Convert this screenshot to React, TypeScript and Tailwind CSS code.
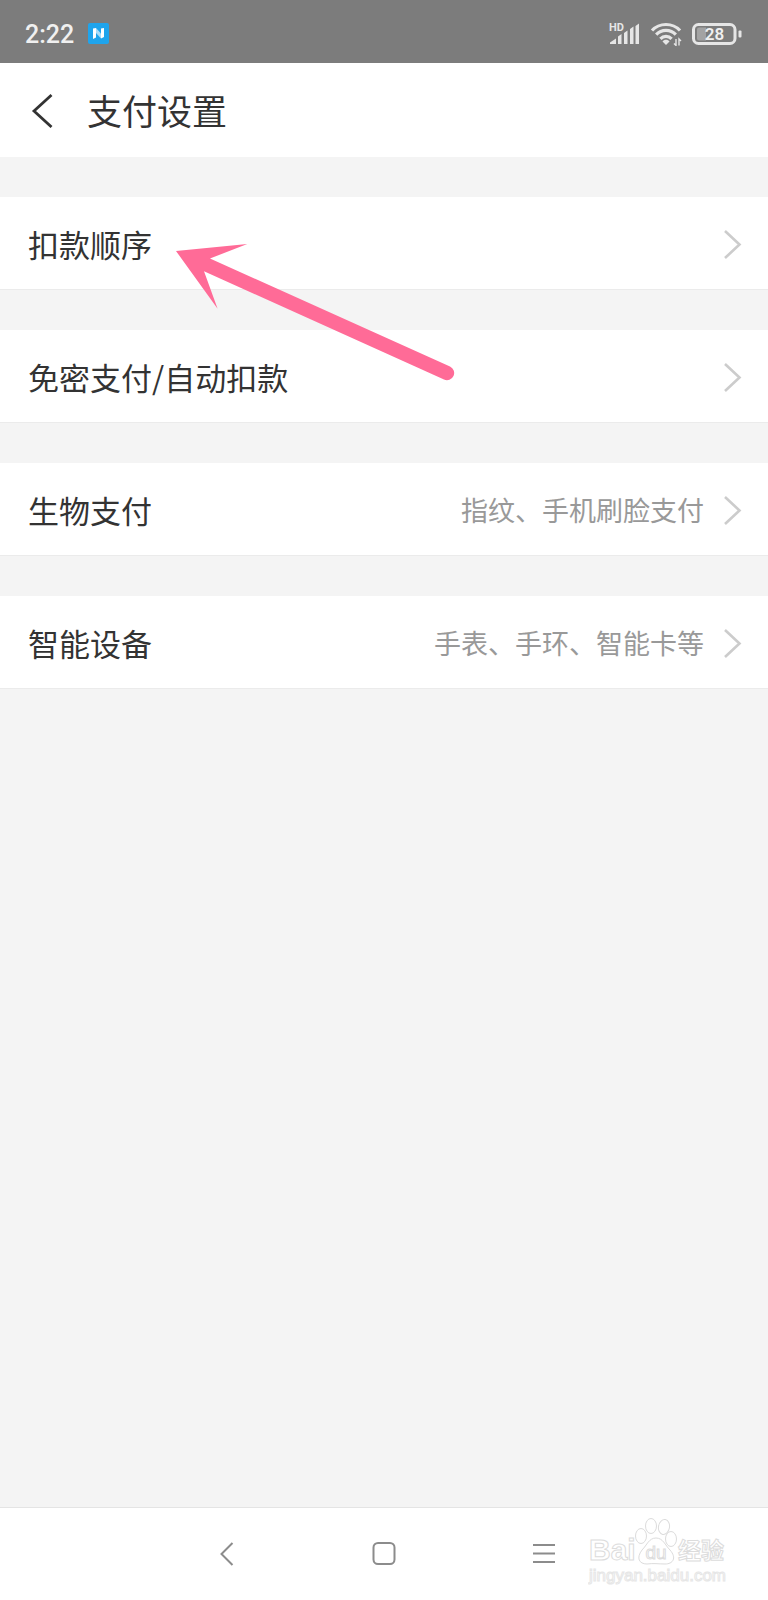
import React, { JSX } from "react";

interface SettingRowProps {
  name: string,
  detail?: string,
}

const SettingRow = ({ name, detail }: SettingRowProps) => (
  <li className="border-b border-[#ebebeb] bg-white">
    <button className="flex h-[92px] w-full cursor-pointer items-center pl-7 pr-[26px] pt-0.5 text-left">
      <span className="flex-1 text-[31px] leading-10 text-[#333333]">{name}</span>
      {detail && <span className="text-[27px] leading-10 text-[#999999]">{detail}</span>}
      <svg className="ml-5 h-[30px] w-[18px]" viewBox="0 0 18 30" fill="none" stroke="#cccccc" strokeWidth="2.6">
        <path d="M1 2 15.500 15.500 1 29" />
      </svg>
    </button>
  </li>
);

const SignalIcon = () => (
  <svg className="h-6 w-8" viewBox="0 0 32 24" fill="#e6e6e6">
    <text x="1" y="9" fontSize="11" fontWeight="700" fontFamily="Roboto, sans-serif">HD</text>
    <path d="M2 22v-1.500l6-4v5.500zM10 22v-7.500l3.500-2.500v10zM16 22v-11l3.500-2.500v13.500zM22 22v-15l3.500-2.500v17.500zM27.500 22v-18l3.500-2.500v20.500z" />
  </svg>
);

const WifiIcon = () => (
  <svg className="h-6 w-8" viewBox="0 0 32 24" fill="none" stroke="#e6e6e6" strokeWidth="3.200">
    <path d="M2 8.500C9.500 0.500 22.500 0.500 30 8.500" />
    <path d="M6.200 12.700C11.500 7 20.500 7 25.800 12.700" />
    <path d="M10.400 16.900C13.500 13.500 18.500 13.500 21.600 16.900" />
    <path d="M12.500 19.500c1.500-2.200 5.500-2.200 7 0l-3.500 3.500z" fill="#e6e6e6" stroke="none" />
    <path d="M26 17v6.500l-2-2M29 23.500V17l2 2" strokeWidth="1.400" />
  </svg>
);

const BatteryIcon = () => (
  <svg className="h-6 w-[50px]" viewBox="0 0 50 24">
    <rect x="1.500" y="2.500" width="41.500" height="19" rx="5" fill="none" stroke="#e6e6e6" strokeWidth="3" />
    <path d="M7 5.500h7v13H7a2 2 0 0 1-2-2v-9a2 2 0 0 1 2-2z" fill="#a3a3a3" />
    <rect x="46.500" y="8.500" width="3" height="7" rx="1" fill="#e6e6e6" />
    <text x="22.500" y="18" textAnchor="middle" fontSize="17" fontWeight="600" fontFamily="Roboto, sans-serif" fill="#f0f0f0">28</text>
  </svg>
);

const StatusBar = () => (
  <div className="flex h-[63px] items-center bg-[#7c7c7c] pl-[25px] pr-[26px] pt-1">
    <span className="pt-0.5 font-[Roboto,sans-serif] text-[25px] font-medium leading-8 text-[#f0f0f0]">2:22</span>
    <svg className="ml-3.5 h-[21px] w-[21px]" viewBox="0 0 21 21">
      <rect width="21" height="21" rx="2" fill="#1fa4ec" />
      <path d="M5 5.500 8 5v9.500l-3 1.500zM13 5.500l3-.5v9l-3 1.500z" fill="#ffffff" />
      <path d="M8 5l5 5.500v5L8 10z" fill="#a9dcf8" />
    </svg>
    <div className="ml-auto flex items-center gap-2.5">
      <SignalIcon />
      <WifiIcon />
      <BatteryIcon />
    </div>
  </div>
);

const PointerArrow = () => (
  <svg className="pointer-events-none absolute left-[170px] top-20 h-[150px] w-[290px]" viewBox="0 0 290 150" fill="#ff6b97">
    <path d="M6 14 77.300 7 40 21.500 280 129.500A7 7 0 0 1 274 142.500L34 34.300 47.600 71.700z" />
  </svg>
);

const Watermark = () => (
  <svg className="pointer-events-none absolute bottom-3.5 right-9 h-[78px] w-[144px]" viewBox="0 0 144 78" fill="#ffffff" stroke="#dcdcdc" strokeWidth="1">
    <text x="1" y="52" fontSize="30" fontWeight="700" fontFamily="'Liberation Sans', sans-serif">Bai</text>
    <text x="90" y="51" fontSize="23" fontWeight="700" fontFamily="'Noto Sans CJK SC', sans-serif">经验</text>
    <ellipse cx="53" cy="28" rx="5.500" ry="7.500" />
    <ellipse cx="63" cy="18" rx="5.500" ry="7.500" />
    <ellipse cx="76" cy="19" rx="5.500" ry="7.500" transform="rotate(10 76 19)" />
    <ellipse cx="83" cy="31" rx="5.500" ry="7.500" />
    <path d="M68 30c7 0 9 7 14 12 7 8 3 14-5 14-7 0-11-1-18 0-8 0-11-6-5-14 5-5 7-12 14-12z" />
    <text x="68" y="51" fontSize="19" textAnchor="middle" fontFamily="'Liberation Sans', sans-serif">du</text>
    <text x="1" y="73" fontSize="17" fontFamily="'Liberation Sans', sans-serif" stroke="#e6e6e6">jingyan.baidu.com</text>
  </svg>
);

const NavBar = () => (
  <nav className="relative flex h-[93px] items-center justify-center gap-[135px] border-t border-[#e4e4e4] bg-white">
    <button aria-label="返回" className="cursor-pointer">
      <svg className="h-6 w-6" viewBox="0 0 24 24" fill="none" stroke="#8c8c8c" strokeWidth="2">
        <path d="M19.500 1 8.500 12l11 11" />
      </svg>
    </button>
    <button aria-label="主页" className="cursor-pointer">
      <svg className="h-6 w-6" viewBox="0 0 24 24" fill="none" stroke="#8c8c8c" strokeWidth="2">
        <rect x="1.500" y="1" width="21" height="21" rx="4.500" />
      </svg>
    </button>
    <button aria-label="菜单" className="cursor-pointer">
      <svg className="h-6 w-6" viewBox="0 0 24 24" fill="none" stroke="#8c8c8c" strokeWidth="2">
        <path d="M2 3h22M2 11.500h22M2 20h22" />
      </svg>
    </button>
    <Watermark />
  </nav>
);

export default function App(): JSX.Element {
  return (
    <div className="flex min-h-screen flex-col bg-[#f4f4f4] font-['Noto_Sans_CJK_SC',sans-serif]">
      <StatusBar />
      <header className="flex h-[94px] items-center bg-white pl-[31px]">
        <button aria-label="返回" className="cursor-pointer">
          <svg className="h-9 w-[22px]" viewBox="0 0 22 36" fill="none" stroke="#333333" strokeWidth="2.800">
            <path d="M20.500 3 3 19l17.500 16" />
          </svg>
        </button>
        <h1 className="ml-[34px] text-[35px] leading-[48px] text-[#333333]">支付设置</h1>
      </header>
      <main className="relative flex-1 pt-10">
        <ul className="flex flex-col gap-10">
          <SettingRow name="扣款顺序" />
          <SettingRow name="免密支付/自动扣款" />
          <SettingRow name="生物支付" detail="指纹、手机刷脸支付" />
          <SettingRow name="智能设备" detail="手表、手环、智能卡等" />
        </ul>
        <PointerArrow />
      </main>
      <NavBar />
    </div>
  );
}
